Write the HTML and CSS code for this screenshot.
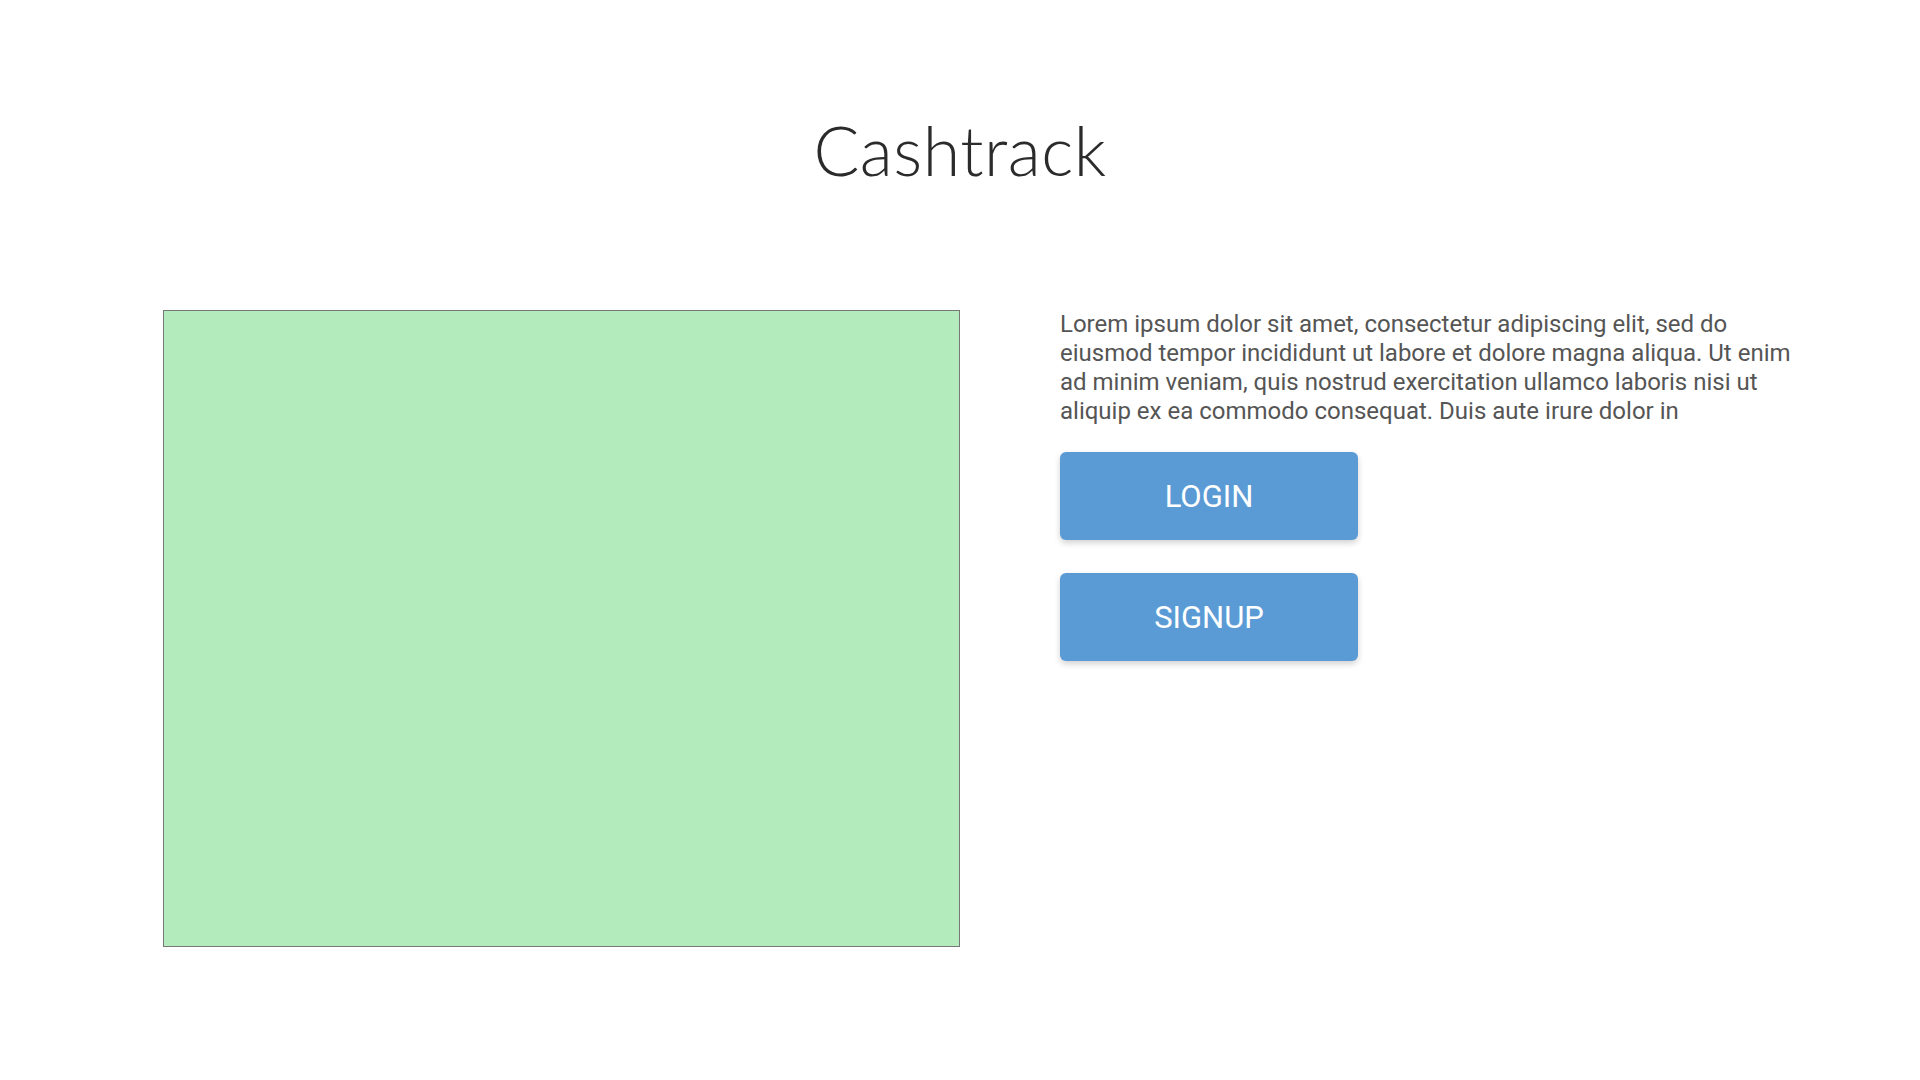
FILE: index.html
```html
<!DOCTYPE html>
<html>
<head>
<meta charset="utf-8">
<title>Cashtrack</title>
<link rel="stylesheet" href="styles.css">
</head>
<body>
<header class="header">
  <h1 class="title">Cashtrack</h1>
</header>
<main class="main">
  <div class="image-box"></div>
  <div class="side">
    <p class="intro">Lorem ipsum dolor sit amet, consectetur adipiscing elit, sed do eiusmod tempor incididunt ut labore et dolore magna aliqua. Ut enim ad minim veniam, quis nostrud exercitation ullamco laboris nisi ut aliquip ex ea commodo consequat. Duis aute irure dolor in</p>
    <div class="actions">
      <button class="btn">LOGIN</button>
      <button class="btn">SIGNUP</button>
    </div>
  </div>
</main>
</body>
</html>
```

FILE: styles.css
```css
html, body {
  margin: 0;
  padding: 0;
  background: #ffffff;
}
body {
  font-family: Roboto, "Liberation Sans", sans-serif;
  width: 1920px;
  height: 1080px;
  overflow: hidden;
}
.header {
  padding-top: 110px;
  display: flex;
  justify-content: center;
}
.title {
  margin: 0;
  font-family: Lato, "Open Sans", sans-serif;
  font-weight: 300;
  font-size: 68px;
  line-height: 80px;
  color: #2b2b2b;
  letter-spacing: 0.5px;
}
.main {
  display: flex;
  padding-top: 120px;
  padding-left: 163px;
  gap: 100px;
}
.image-box {
  width: 795px;
  height: 635px;
  background: #b3ebbd;
  border: 1px solid #777777;
  flex: none;
}
.side {
  width: 745px;
}
.intro {
  margin: 0;
  padding-top: 0;
  font-size: 24px;
  line-height: 29px;
  color: #555555;
}
.actions {
  display: flex;
  flex-direction: column;
  gap: 33px;
  margin-top: 26px;
}
.btn {
  width: 298px;
  height: 88px;
  border: none;
  border-radius: 6px;
  background: #5a9bd5;
  color: #ffffff;
  font-family: Roboto, "Liberation Sans", sans-serif;
  font-size: 31px;
  box-shadow: 0 3px 6px rgba(0, 0, 0, 0.18);
  cursor: pointer;
  padding: 0;
}
```
